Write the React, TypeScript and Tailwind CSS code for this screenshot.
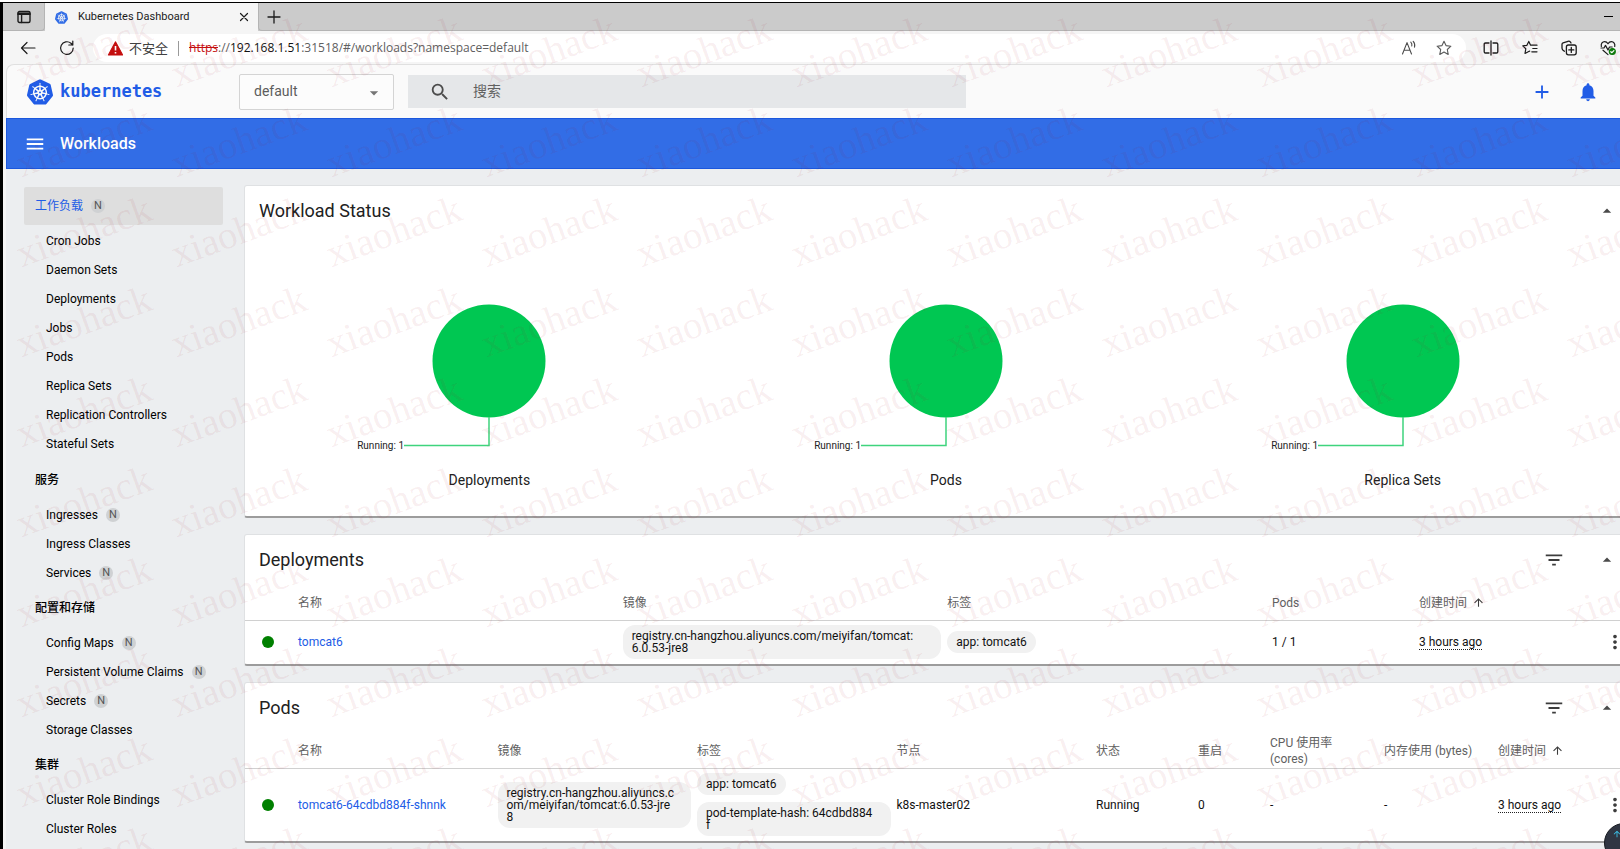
import React from 'react';
import {
  MdAdd,
  MdArrowDropDown,
  MdArrowDropUp,
  MdArrowUpward,
  MdFilterList,
  MdMenu,
  MdMoreVert,
  MdNotifications,
  MdSearch,
} from 'react-icons/md';
import { SiKubernetes } from 'react-icons/si';

type NavItem = { label: string; namespaced?: boolean };
type NavGroup = { title: string; active?: boolean; namespaced?: boolean; items: NavItem[] };

const NAV: NavGroup[] = [
  {
    title: '工作负载',
    active: true,
    namespaced: true,
    items: [
      { label: 'Cron Jobs' },
      { label: 'Daemon Sets' },
      { label: 'Deployments' },
      { label: 'Jobs' },
      { label: 'Pods' },
      { label: 'Replica Sets' },
      { label: 'Replication Controllers' },
      { label: 'Stateful Sets' },
    ],
  },
  {
    title: '服务',
    items: [
      { label: 'Ingresses', namespaced: true },
      { label: 'Ingress Classes' },
      { label: 'Services', namespaced: true },
    ],
  },
  {
    title: '配置和存储',
    items: [
      { label: 'Config Maps', namespaced: true },
      { label: 'Persistent Volume Claims', namespaced: true },
      { label: 'Secrets', namespaced: true },
      { label: 'Storage Classes' },
    ],
  },
  {
    title: '集群',
    items: [{ label: 'Cluster Role Bindings' }, { label: 'Cluster Roles' }],
  },
];

const stroke = {
  fill: 'none',
  stroke: 'currentColor',
  strokeLinecap: 'round' as const,
  strokeLinejoin: 'round' as const,
};

function TabBar() {
  return (
    <div className="flex h-[28px] shrink-0 bg-[#cbcbcb] text-[#1b1b1b]">
      <button aria-label="Tab actions" className="flex w-[42px] items-center justify-center rounded-br border-r border-b border-[#b4b4b4]">
        <svg viewBox="0 0 14 14" className="h-[14px] w-[14px]" {...stroke} strokeWidth="1.4">
          <rect x="1" y="1.5" width="12" height="11" rx="1.5" />
          <path d="M1 3.2h12M1 4.4h12M4.6 4.5v8" />
        </svg>
      </button>
      <div className="flex w-[213px] items-center bg-[#f5f5f5] pl-[10px]">
        <SiKubernetes className="h-[13px] w-[13px] text-[#326de6]" />
        <span className="ml-[10px] flex-1 text-[11px]">Kubernetes Dashboard</span>
        <button aria-label="Close tab" className="mr-[6px] flex h-4 w-4 items-center justify-center">
          <svg viewBox="0 0 10 10" className="h-[10px] w-[10px]" {...stroke} strokeWidth="1.2">
            <path d="M1.5 1.5l7 7M8.5 1.5l-7 7" />
          </svg>
        </button>
      </div>
      <div className="flex flex-1 items-center rounded-bl border-b border-l border-[#b4b4b4]">
        <button aria-label="New tab" className="ml-[7px] flex h-4 w-4 items-center justify-center">
          <svg viewBox="0 0 14 14" className="h-[14px] w-[14px]" {...stroke} strokeWidth="1.3">
            <path d="M7 1v12M1 7h12" />
          </svg>
        </button>
        <button aria-label="Minimize" className="mr-[7px] ml-auto flex h-4 w-[9px] items-center">
          <span className="h-px w-full bg-black" />
        </button>
      </div>
    </div>
  );
}

function AddressBar() {
  return (
    <div className="flex h-[33px] shrink-0 items-center bg-[#f5f5f5] pt-px text-[#1b1b1b]">
      <button aria-label="Back" className="ml-[17px] flex h-5 w-[18px] items-center">
        <svg viewBox="0 0 16 14" className="h-[14px] w-4" {...stroke} strokeWidth="1.2">
          <path d="M15 7H1.5M7 1.5L1.5 7 7 12.5" />
        </svg>
      </button>
      <button aria-label="Refresh" className="ml-[21px] flex h-5 w-[18px] items-center">
        <svg viewBox="0 0 16 16" className="h-4 w-4" {...stroke} strokeWidth="1.2">
          <path d="M14.2 8A6.3 6.3 0 1 1 12 3.3L13.800 5M13.800 1v4H9.800" />
        </svg>
      </button>
      <div className="ml-[16px] flex h-[28px] flex-1 items-center rounded-full bg-white pl-[15px]">
        <svg viewBox="0 0 14 14" className="h-[15px] w-[15px]">
          <path d="M7 .8L13.6 13H.4z" fill="#c50e0e" stroke="#c50e0e" strokeLinejoin="round" />
          <path d="M7 4.6v4.2M7 10.2v1.4" stroke="#fff" strokeWidth="1.5" />
        </svg>
        <span className="ml-[6px] font-['Noto_Sans_CJK_SC',sans-serif] text-[13px] text-[#404040]">不安全</span>
        <span className="mx-[10px] h-[15px] w-px bg-[#9a9a9a]" />
        <div
          role="textbox"
          aria-label="Address"
          contentEditable
          suppressContentEditableWarning
          className="flex-1 font-['Open_Sans',sans-serif] text-[12px] whitespace-nowrap text-[#606060]"
        >
          <span className="text-[#c50e0e] line-through">https</span>://
          <span className="text-[#111]">192.168.1.51</span>:31518/#/workloads?namespace=default
        </div>
        <button aria-label="Read aloud" className="flex h-5 w-5 items-center text-[#4c4c4c]">
          <svg viewBox="0 0 16 16" className="h-4 w-4" {...stroke} strokeWidth="1.1">
            <path d="M1.5 14L6 2.6 10.5 14M3 10.3h6M9.8 2.2c1 1 1.3 2.4 1 3.8M12.2 1.4c1.5 1.6 1.9 3.6 1.3 5.800" />
          </svg>
        </button>
        <button aria-label="Add to favorites" className="mr-[14px] ml-[15px] flex h-5 w-4 items-center text-[#5a5a5a]">
          <svg viewBox="0 0 16 16" className="h-4 w-4" {...stroke} strokeWidth="1.1">
            <path d="M8 1.200l2 4.400 4.900.6-3.600 3.300.9 4.900L8 12l-4.200 2.400.9-4.900L1.100 6.200 6 5.600z" />
          </svg>
        </button>
      </div>
      <div className="flex items-center gap-[23px] pl-[17px]">
        <button aria-label="Split screen" className="h-4 w-4">
          <svg viewBox="0 0 16 16" className="h-4 w-4" {...stroke} strokeWidth="1.3">
            <path d="M6 3H2.5Q1.2 3 1.2 4.3v7.4Q1.2 13 2.5 13H6M10 3h3.5q1.3 0 1.3 1.3v7.4q0 1.3-1.3 1.3H10M8 1v14" />
          </svg>
        </button>
        <button aria-label="Favorites" className="h-4 w-4">
          <svg viewBox="0 0 16 16" className="h-4 w-4" {...stroke} strokeWidth="1.2">
            <path d="M8.800 5.200H15M10.800 8.500H15M9.800 11.800H15M8.600 5.200L6.800 1.400 4.900 5.300.8 5.900l3 2.900-.8 4.700 3.700-2 1-.4" />
          </svg>
        </button>
        <button aria-label="Collections" className="h-4 w-4">
          <svg viewBox="0 0 16 16" className="h-4 w-4" {...stroke} strokeWidth="1.3">
            <rect x="5.4" y="5" width="9.8" height="9.8" rx="2" />
            <path d="M10.3 7.4v5M7.8 9.9h5M3.4 11.2L1.8 9.9Q1 9.200 1 8V4.500Q1 3.300 2.100 2.900L7 1.300Q8.500.900 9.500 2.200L10 3" />
          </svg>
        </button>
        <button aria-label="Browser essentials" className="mr-[2px] h-4 w-[18px]">
          <svg viewBox="0 0 18 16" className="h-4 w-[18px]" {...stroke} strokeWidth="1.2">
            <path d="M1.300 6.500C.8 3.500 2.500 1.700 4.600 1.700 6.400 1.700 7.500 3 8 3.800c.5-.8 1.600-2.100 3.400-2.100 2.300 0 4 2 3.300 4.800M1 8h3l1.500-2.600L8 10l1.500-3h2.700M3 10.200l5 4.400" />
            <circle cx="12.300" cy="11.500" r="3" fill="#0e7a0d" stroke="#0e7a0d" />
            <path d="M10.800 11.700l1.100 1 2-2.100" stroke="#fff" />
          </svg>
        </button>
      </div>
    </div>
  );
}

function AppHeader() {
  return (
    <header className="flex h-[54px] shrink-0 items-center rounded-tl-lg border-t border-l border-[#e0e0e0] bg-[#fafafa]">
      <a href="#/" className="ml-[20px] flex w-[212px] items-center text-[#215ce6]">
        <SiKubernetes className="h-[26px] w-[26px]" />
        <span className="ml-[7px] font-['DejaVu_Sans_Mono',monospace] text-[17px] font-bold">kubernetes</span>
      </a>
      <div className="relative w-[155px]">
        <select
          aria-label="Namespace"
          className="h-[36px] w-full appearance-none rounded-[2px] border border-[#d4d4d4] bg-[#fcfcfc] pl-[14px] text-[14px] text-[#5c5c5c]"
        >
          <option>default</option>
        </select>
        <MdArrowDropDown className="pointer-events-none absolute top-[9px] right-[10px] h-5 w-5 text-[#757575]" />
      </div>
      <label className="ml-[14px] flex h-[33px] w-[558px] items-center bg-[#e5e7e9] pl-[21px]">
        <MdSearch className="h-[22px] w-[22px] text-[#4c4c4c]" />
        <input
          aria-label="搜索"
          placeholder="搜索"
          className="ml-[22px] flex-1 bg-transparent text-[14px] outline-none placeholder:text-[#616161]"
        />
      </label>
      <button aria-label="Create" className="mr-[24px] ml-auto text-[#215ce6]">
        <MdAdd className="h-[22px] w-[22px]" />
      </button>
      <button aria-label="Notifications" className="mr-[21px] text-[#215ce6]">
        <MdNotifications className="h-[22px] w-[22px]" />
      </button>
    </header>
  );
}

function Badge() {
  return (
    <span className="ml-[8px] flex h-[14px] w-[14px] items-center justify-center rounded-full bg-[#cfd1d3] text-[11px] leading-none text-[#555]">
      N
    </span>
  );
}

function Sidebar() {
  return (
    <nav className="w-[238px] shrink-0 pt-[16px] pr-[21px] pl-[18px] text-[12px] text-black">
      {NAV.map((group) => (
        <section key={group.title}>
          <div className="flex h-[41px] items-center">
            <a
              href="#/"
              className={
                group.active
                  ? 'flex h-[38px] w-full items-center rounded-[2px] bg-[#dedede] pl-[11px] text-[#215ce6]'
                  : 'flex w-full items-center pl-[11px] font-medium'
              }
            >
              {group.title}
              {group.namespaced && <Badge />}
            </a>
          </div>
          <ul className={group.active ? 'pb-px' : ''}>
            {group.items.map((item) => (
              <li key={item.label}>
                <a href="#/" className="flex h-[29px] items-center pl-[22px]">
                  {item.label}
                  {item.namespaced && <Badge />}
                </a>
              </li>
            ))}
          </ul>
        </section>
      ))}
    </nav>
  );
}

function Card({ title, filter, children }: { title: string; filter?: boolean; children: React.ReactNode }) {
  return (
    <section className="rounded-[3px] border border-b-2 border-[#dfe1e3] border-b-[#9c9c9c] bg-white">
      <div className="flex h-[49px] items-center pr-[29px] pl-[14px]">
        <h2 className="flex-1 text-[18px] text-[#212121]">{title}</h2>
        {filter && (
          <button aria-label="Filter" className="mr-[32px]">
            <MdFilterList className="h-[22px] w-[22px] text-[#3c3c3c]" />
          </button>
        )}
        <button aria-label="Collapse">
          <MdArrowDropUp className="h-5 w-5 text-[#4a4a4a]" />
        </button>
      </div>
      {children}
    </section>
  );
}

function StatusChart({ name }: { name: string }) {
  return (
    <figure className="flex flex-1 flex-col items-center">
      <svg viewBox="0 0 280 190" className="h-[190px] w-[280px]">
        <circle cx="140" cy="81" r="56.5" fill="#00c752" />
        <path d="M140 137v28.500H55" fill="none" stroke="#3fd47d" strokeWidth="1.500" />
        <text x="55" y="169" textAnchor="end" fontSize="10" fill="#222">
          Running: 1
        </text>
      </svg>
      <figcaption className="text-[14px] leading-5 text-[#212121]">{name}</figcaption>
    </figure>
  );
}

function Chip({ children }: { children: string }) {
  const wrapped = children.includes('\n');
  return (
    <span
      className={
        (wrapped ? 'block w-full' : 'block w-fit') +
        ' rounded-[12px] bg-[#f1f1f1] px-[9px] py-[5px] leading-[12px] whitespace-pre-line text-[#111]'
      }
    >
      {children}
    </span>
  );
}

const headRow = 'h-[36px] border-b border-[#d0d0d0] text-left text-[#616161]';
const headCell = 'pt-[2px] pr-[6px] pb-0 pl-0 font-normal';
const bodyCell = 'py-0 pr-[6px] pl-0';

function StatusDot() {
  return (
    <td className="py-0 pl-[17px]">
      <span className="block h-3 w-3 rounded-full bg-[#008000]" aria-label="Running" />
    </td>
  );
}

function SortedHead() {
  return (
    <th className={headCell}>
      <span className="flex items-center">
        创建时间
        <MdArrowUpward className="ml-[5px] h-[13px] w-[13px] text-[#3c3c3c]" />
      </span>
    </th>
  );
}

function Age() {
  return (
    <td className={bodyCell}>
      <span className="inline-block border-b border-dotted border-[#222] leading-[13px]">3 hours ago</span>
    </td>
  );
}

function RowMenu() {
  return (
    <td className="p-0">
      <button aria-label="Actions" className="ml-[3px] block">
        <MdMoreVert className="h-[22px] w-[22px] text-[#3c3c3c]" />
      </button>
    </td>
  );
}

function DeploymentsTable() {
  return (
    <table className="w-full table-fixed border-collapse text-[12px] leading-4 text-[#111]">
      <colgroup>
        <col className="w-[53px]" />
        <col />
        <col />
        <col />
        <col className="w-[147px]" />
        <col className="w-[182px]" />
        <col className="w-[45px]" />
      </colgroup>
      <thead>
        <tr className={headRow}>
          <th />
          <th className={headCell}>名称</th>
          <th className={headCell}>镜像</th>
          <th className={headCell}>标签</th>
          <th className={headCell}>Pods</th>
          <SortedHead />
          <th />
        </tr>
      </thead>
      <tbody>
        <tr className="h-[44px]">
          <StatusDot />
          <td className={bodyCell}>
            <a href="#/" className="text-[#215ce6]">tomcat6</a>
          </td>
          <td className={bodyCell}>
            <Chip>{'registry.cn-hangzhou.aliyuncs.com/meiyifan/tomcat:\n6.0.53-jre8'}</Chip>
          </td>
          <td className={bodyCell}>
            <Chip>app: tomcat6</Chip>
          </td>
          <td className={bodyCell}>1 / 1</td>
          <Age />
          <RowMenu />
        </tr>
      </tbody>
    </table>
  );
}

function PodsTable() {
  return (
    <table className="w-full table-fixed border-collapse text-[12px] leading-4 text-[#111]">
      <colgroup>
        <col className="w-[53px]" />
        <col />
        <col />
        <col />
        <col />
        <col className="w-[102px]" />
        <col className="w-[72px]" />
        <col className="w-[114px]" />
        <col className="w-[114px]" />
        <col className="w-[103px]" />
        <col className="w-[45px]" />
      </colgroup>
      <thead>
        <tr className={headRow}>
          <th />
          <th className={headCell}>名称</th>
          <th className={headCell}>镜像</th>
          <th className={headCell}>标签</th>
          <th className={headCell}>节点</th>
          <th className={headCell}>状态</th>
          <th className={headCell}>重启</th>
          <th className={headCell}>
            CPU 使用率
            <br />
            (cores)
          </th>
          <th className={headCell}>内存使用 (bytes)</th>
          <SortedHead />
          <th />
        </tr>
      </thead>
      <tbody>
        <tr className="h-[73px]">
          <StatusDot />
          <td className={bodyCell}>
            <a href="#/" className="text-[#215ce6]">tomcat6-64cdbd884f-shnnk</a>
          </td>
          <td className={bodyCell}>
            <Chip>{'registry.cn-hangzhou.aliyuncs.c\nom/meiyifan/tomcat:6.0.53-jre\n8'}</Chip>
          </td>
          <td className={bodyCell}>
            <div className="flex flex-col gap-[7px]">
              <Chip>app: tomcat6</Chip>
              <Chip>{'pod-template-hash: 64cdbd884\nf'}</Chip>
            </div>
          </td>
          <td className={bodyCell}>k8s-master02</td>
          <td className={bodyCell}>Running</td>
          <td className={bodyCell}>0</td>
          <td className={bodyCell}>-</td>
          <td className={bodyCell}>-</td>
          <Age />
          <RowMenu />
        </tr>
      </tbody>
    </table>
  );
}

function Watermark() {
  return (
    <div
      aria-hidden="true"
      className="pointer-events-none absolute top-[3px] left-[24px] grid auto-rows-[90px] grid-cols-[repeat(11,155px)] font-['Liberation_Serif',serif] text-[39px] leading-none text-[#a0142d]/8 select-none"
    >
      {Array.from({ length: 110 }, (_, i) => (
        <span key={i} className="flex items-end">
          <span className="origin-bottom-left -rotate-20">xiaohack</span>
        </span>
      ))}
    </div>
  );
}

export default function App() {
  return (
    <div className="relative flex h-screen flex-col overflow-hidden bg-white pt-[2px] font-[Roboto,'Noto_Sans_CJK_SC',sans-serif]">
      <div className="flex min-h-0 flex-1 flex-col border-t border-l-[3px] border-black">
        <TabBar />
        <AddressBar />
        <div className="flex min-h-0 flex-1 flex-col bg-[#f5f5f5] pl-[3px]">
          <AppHeader />
          <div className="flex h-[51px] shrink-0 items-center border border-r-0 border-[#1b57dd] bg-[#326de6] pl-[17px] text-white">
            <button aria-label="Menu">
              <MdMenu className="h-[22px] w-[22px]" />
            </button>
            <h1 className="ml-[14px] text-[16px] font-medium">Workloads</h1>
          </div>
          <div className="flex min-h-0 flex-1 bg-[#eceef0]">
            <Sidebar />
            <main className="-mr-[27px] flex min-w-0 flex-1 flex-col gap-[16px] pt-[16px]">
              <Card title="Workload Status">
                <div className="flex pt-[45px] pr-[15px] pb-[26px] pl-[16px]">
                  <StatusChart name="Deployments" />
                  <StatusChart name="Pods" />
                  <StatusChart name="Replica Sets" />
                </div>
              </Card>
              <Card title="Deployments" filter>
                <DeploymentsTable />
              </Card>
              <Card title="Pods" filter>
                <PodsTable />
              </Card>
            </main>
          </div>
        </div>
      </div>
      <button
        aria-label="Back to top"
        className="absolute -right-[24px] -bottom-[14px] flex h-10 w-10 items-start rounded-full border border-[#15181f] bg-[#303542] pt-[5px] pl-[7px] text-[#3cc8f0]"
      >
        <MdArrowUpward className="h-[10px] w-[10px]" />
      </button>
      <Watermark />
    </div>
  );
}
